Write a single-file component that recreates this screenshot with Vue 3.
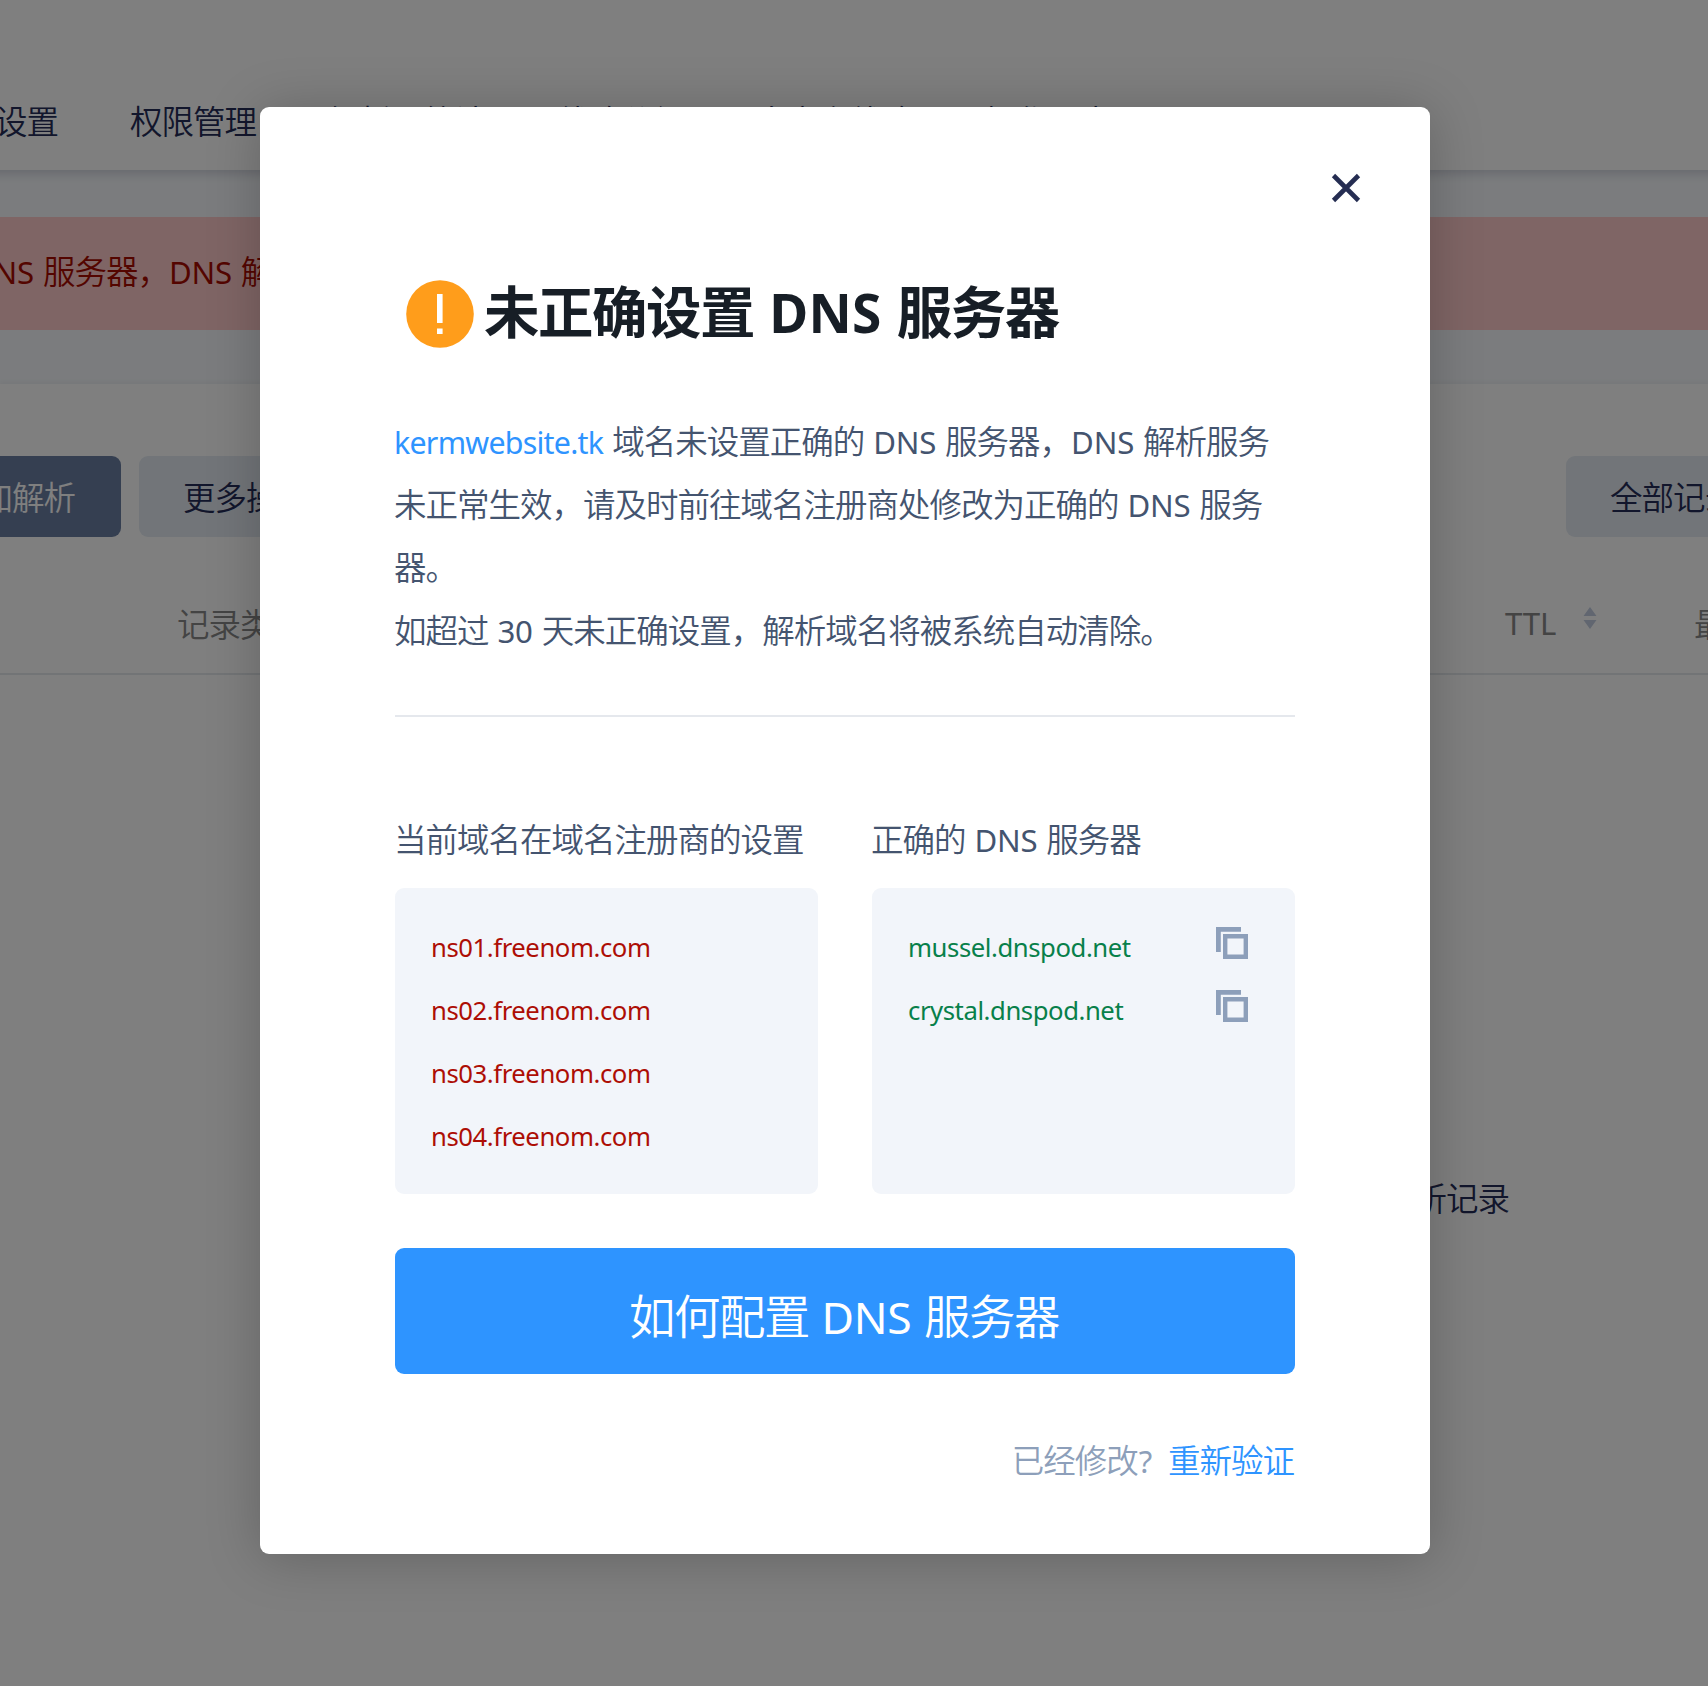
<script setup>
const navItems = ['域名设置', '权限管理', '解析量统计', '线路分组', '自定义线路', '操作日志']
const currentServers = ['ns01.freenom.com', 'ns02.freenom.com', 'ns03.freenom.com', 'ns04.freenom.com']
const correctServers = ['mussel.dnspod.net', 'crystal.dnspod.net']
</script>

<template>
  <div class="page">
    <header class="nav">
      <span v-for="item in navItems" :key="item">{{ item }}</span>
    </header>
    <div class="alert"><span><i class="lat">DNS </i>服务器，<i class="lat">DNS </i>解析服务未正常生效</span></div>
    <main class="panel">
      <div class="toolbar">
        <div class="btn primary">添加解析</div>
        <div class="btn more">更多操作</div>
        <div class="btn filter">全部记录</div>
      </div>
      <div class="thead">
        <span class="col-type">记录类型</span>
        <span class="col-ttl"><i class="lat">TTL</i></span>
        <svg class="sort" width="14" height="22" viewBox="0 0 14 22"><path d="M7 0L13.5 9H.5zM7 22L.5 13h13z" fill="#c3cde0" /></svg>
        <span class="col-last">最后操作时间</span>
      </div>
      <div class="empty">暂无解析记录</div>
    </main>

    <div class="mask">
      <section class="dialog">
        <svg class="close" width="30" height="30" viewBox="0 0 30 30"><path d="M2.5 2.5l25 25M27.5 2.5l-25 25" stroke="#252d52" stroke-width="4.6" fill="none" /></svg>
        <h1 class="title">
          <svg width="68" height="68" viewBox="0 0 68 68"><circle cx="34" cy="34" r="33.8" fill="#ff9d1b" /><path d="M31 14h5.6v29H31zM31 48.4h5.6v5.6H31z" fill="#fff" /></svg>
          <span>未正确设置<i class="lat"> DNS </i>服务器</span>
        </h1>
        <div class="desc">
          <p><a class="lat domain">kermwebsite.tk</a><i class="lat">&nbsp;</i>域名未设置正确的<i class="lat"> DNS </i>服务器，<i class="lat">DNS </i>解析服务</p>
          <p>未正常生效，请及时前往域名注册商处修改为正确的<i class="lat"> DNS </i>服务</p>
          <p>器。</p>
          <p>如超过<i class="lat"> 30 </i>天未正确设置，解析域名将被系统自动清除。</p>
        </div>
        <div class="columns">
          <div class="column">
            <h2>当前域名在域名注册商的设置</h2>
            <ul class="wrong">
              <li v-for="s in currentServers" :key="s">{{ s }}</li>
            </ul>
          </div>
          <div class="column">
            <h2>正确的<i class="lat"> DNS </i>服务器</h2>
            <ul class="right">
              <li v-for="s in correctServers" :key="s">
                <span>{{ s }}</span>
                <svg width="32" height="32" viewBox="0 0 32 32" fill="none" stroke="#8d9fba"><path d="M2.4 25V2.4H25" stroke-width="4.8" /><path d="M9.2 9.2h20.6v20.6H9.2z" stroke-width="4.4" /></svg>
              </li>
            </ul>
          </div>
        </div>
        <div class="action">如何配置<i class="lat"> DNS </i>服务器</div>
        <div class="foot"><span>已经修改<i class="lat">?</i></span><a>重新验证</a></div>
      </section>
    </div>
  </div>
</template>

<style>
body { margin: 0; }
</style>

<style scoped>
.page {
  position: relative;
  width: 1708px;
  height: 1686px;
  overflow: hidden;
  display: flex;
  flex-direction: column;
  background: #f6f9fc;
  color: #252d58;
  font: 350 32.5px/63px "Noto Sans CJK SC", sans-serif;
  letter-spacing: -1px;
  white-space: nowrap;
}
i { font-style: normal; }
.lat {
  font-family: "Noto Sans", "Noto Sans CJK SC", sans-serif;
  font-size: 0.96em;
  font-weight: 400;
  line-height: 1;
  letter-spacing: -0.2px;
  word-spacing: 1px;
  white-space: pre;
}
.nav {
  position: relative;
  flex: none;
  height: 170px;
  box-sizing: border-box;
  padding-top: 88px;
  margin: 0 -40px 0 -68px;
  display: flex;
  gap: 72px;
  background: #fff;
  box-shadow: 0 4px 9px rgba(54, 58, 100, 0.2);
}
.alert {
  flex: none;
  height: 113px;
  margin-top: 47px;
  box-sizing: border-box;
  padding-bottom: 8px;
  display: flex;
  align-items: center;
  background: #ffcaca;
  color: #a80b00;
}
.alert span { margin-left: -29px; }
.panel {
  flex: 1;
  margin-top: 54px;
  padding-top: 72px;
  background: #fff;
  box-shadow: 0 -2px 4px rgba(54, 58, 100, 0.05);
}
.toolbar { display: flex; height: 81px; margin-left: -50px; }
.btn {
  box-sizing: border-box;
  height: 81px;
  padding: 0 44px;
  line-height: 80px;
  border-radius: 9px;
  background: #e5ebf2;
}
.primary { width: 171px; padding-left: 0; text-indent: -1px; background: #6b7fa3; color: #fff; }
.more { margin-left: 18px; }
.filter { margin-left: auto; margin-right: -72px; }
.thead {
  display: flex;
  height: 138px;
  box-sizing: border-box;
  padding-top: 54px;
  border-bottom: 2px solid #e5e8ed;
  color: #888;
}
.col-type { width: 1328px; flex: none; margin-left: 177px; }
.col-ttl { width: 78px; flex: none; margin-top: -2px; }
.sort { flex: none; margin-top: 16px; width: 14px; }
.col-last { margin-left: 97px; }
.empty { margin: 490px 0 0 1320px; }
.mask {
  position: absolute;
  inset: 0;
  display: flex;
  align-items: flex-start;
  background: rgba(0, 0, 0, 0.5);
}
.dialog {
  position: relative;
  box-sizing: border-box;
  width: 1170px;
  height: 1447px;
  margin: 107px 0 0 260px;
  padding: 173px 135px 0;
  border-radius: 9px;
  background: #fff;
  box-shadow: 0 4px 54px rgba(0, 0, 0, 0.22);
  color: #44546f;
}
.close { position: absolute; right: 69px; top: 66px; }
.title {
  display: flex;
  align-items: center;
  gap: 10px;
  height: 68px;
  margin: 0 0 0 11px;
  color: #171e26;
  font-size: 55.5px;
  font-weight: 700;
  letter-spacing: -1.5px;
}
.title span { margin-top: -9px; }
.title .lat { font-weight: 700; letter-spacing: 0.3px; }
.desc {
  height: 369px;
  box-sizing: border-box;
  padding-top: 60px;
  margin-left: -1px;
}
.desc::after {
  content: "";
  display: block;
  margin: 55px 0 0 1px;
  border-bottom: 2px solid #e5e8ed;
}
.desc p { margin: 0; }
a { color: #2e94ff; }
.domain { font-size: 0.935em; letter-spacing: -0.75px; }
.columns { display: flex; gap: 54px; margin-top: 89px; }
.column { width: 423px; }
h2 { margin: 0 0 19px -1px; font: inherit; }
ul {
  height: 306px;
  box-sizing: border-box;
  margin: 0;
  padding: 28px 36px;
  list-style: none;
  border-radius: 9px;
  background: #f2f5fa;
  font-family: "Noto Sans", sans-serif;
  font-size: 25.7px;
  font-weight: 400;
  letter-spacing: -0.44px;
}
li { display: flex; align-items: center; height: 63px; }
li svg { margin: -10px 11px 0 auto; }
.wrong { color: #ad0e05; }
.right { color: #08804a; }
.action {
  height: 126px;
  margin-top: 54px;
  box-sizing: border-box;
  padding-right: 2px;
  border-radius: 9px;
  background: #2e94ff;
  color: #fff;
  font-size: 46.4px;
  letter-spacing: -1.4px;
  line-height: 132px;
  text-align: center;
}
.foot {
  display: flex;
  justify-content: flex-end;
  gap: 16px;
  margin: 53px 1px 0 0;
  color: #8d9fba;
}
.foot .lat { margin-left: 1px; }
</style>
